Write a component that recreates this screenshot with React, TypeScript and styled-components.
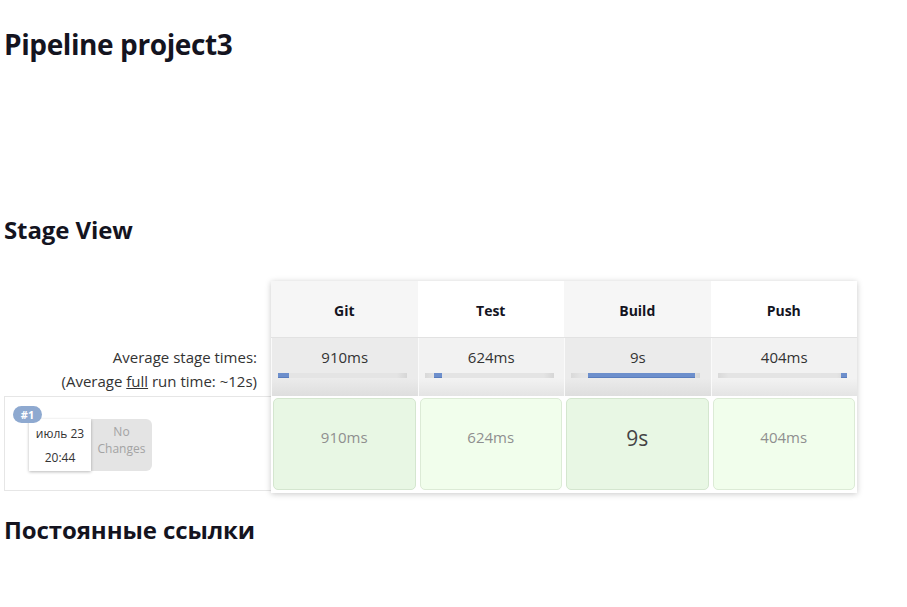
import React from "react";
import styled, { createGlobalStyle } from "styled-components";

const Global = createGlobalStyle`
  html, body { margin: 0; padding: 0; background: #fff; }
  body { font-family: "Open Sans", "Noto Sans", sans-serif; color: #333; }
`;

const Page = styled.div`
  padding: 0 4px;
  width: 899px;
  box-sizing: border-box;
`;

const Title = styled.h1`
  margin: 26px 0 0;
  font-size: 28px;
  line-height: 36px;
  font-weight: 700;
  color: #14141f;
  letter-spacing: -0.4px;
`;

const SectionTitle = styled.h2<{ $top: number }>`
  margin: ${(p) => p.$top}px 0 0;
  font-size: 24px;
  line-height: 30px;
  font-weight: 700;
  color: #14141f;
  letter-spacing: -0.1px;
`;

const StageView = styled.div`
  display: flex;
  margin-top: 36px;
  align-items: flex-start;
`;

const LeftCol = styled.div`
  width: 267px;
  display: flex;
  flex-direction: column;
`;

const HeadSpacer = styled.div`
  height: 57px;
`;

const AvgLabel = styled.div`
  height: 58px;
  box-sizing: border-box;
  padding: 7px 14px 0 0;
  text-align: right;
  font-size: 15px;
  line-height: 24px;
  color: #333;
  u { text-decoration: underline; }
`;

const RunCell = styled.div`
  height: 95px;
  box-sizing: border-box;
  border: 1px solid #e6e6e6;
  border-right: none;
  padding: 22px 0 0 24px;
`;

const RunCard = styled.div`
  position: relative;
  display: flex;
  align-items: stretch;
  width: 124px;
`;

const Badge = styled.span`
  position: absolute;
  left: -16px;
  top: -13px;
  z-index: 2;
  width: 29px;
  height: 17px;
  border-radius: 9px;
  background: #8ea9d0;
  color: #fff;
  font-size: 11px;
  font-weight: 700;
  line-height: 17px;
  text-align: center;
`;

const DateBox = styled.div`
  position: relative;
  z-index: 1;
  width: 62px;
  height: 52px;
  box-sizing: border-box;
  padding-top: 3px;
  background: #fff;
  box-shadow: 0 1px 3px rgba(0, 0, 0, 0.28);
  text-align: center;
  font-size: 12px;
  line-height: 24px;
  color: #333;
`;

const Changes = styled.div`
  width: 61px;
  height: 52px;
  box-sizing: border-box;
  padding-top: 4px;
  background: #e4e4e4;
  border-radius: 0 6px 6px 0;
  text-align: center;
  font-size: 12px;
  line-height: 17px;
  color: #a3a3a3;
`;

const StageTable = styled.div`
  display: grid;
  grid-template-columns: repeat(4, 146.5px);
  grid-template-rows: 57px 58px 97px;
  box-shadow: 0 1px 6px rgba(0, 0, 0, 0.22);
  background: #fff;
`;

const HeaderCell = styled.div<{ $odd: boolean }>`
  display: flex;
  align-items: center;
  justify-content: center;
  padding-top: 2px;
  box-sizing: border-box;
  background: ${(p) => (p.$odd ? "#f6f6f6" : "#ffffff")};
  border-bottom: 1px solid #e2e2e2;
  font-size: 14px;
  font-weight: 700;
  color: #14141f;
`;

const AvgCell = styled.div<{ $odd: boolean }>`
  box-sizing: border-box;
  padding: 7px 0 0 6px;
  background: ${(p) =>
    p.$odd
      ? "linear-gradient(#ebebeb 0%, #ebebeb 70%, #dedede 100%)"
      : "linear-gradient(#f2f2f2 0%, #f2f2f2 70%, #e4e4e4 100%)"};
  border-left: 1px solid #fafafa;
  font-size: 15px;
  line-height: 24px;
  color: #333;
`;

const AvgTime = styled.div`
  text-align: center;
  padding-right: 6px;
`;

const Track = styled.div`
  position: relative;
  margin-top: 4px;
  width: 129px;
  height: 5px;
  background: linear-gradient(90deg, #d9d9d9 0%, #e4e4e4 8%, #e4e4e4 92%, #d6d6d6 100%);
`;

const Fill = styled.div`
  position: absolute;
  top: 0;
  height: 5px;
  background: #6d8fcc;
  box-shadow: inset 0 -1px 0 #5a7dbd;
`;

const ResultCell = styled.div`
  padding: 2px 2px 3px;
  box-sizing: border-box;
  background: #fff;
`;

const ResultBox = styled.div<{ $odd: boolean; $big: boolean }>`
  height: 100%;
  box-sizing: border-box;
  border: 1px solid ${(p) => (p.$odd ? "#d4e6cf" : "#dcebd6")};
  border-radius: 5px;
  background: ${(p) => (p.$odd ? "#e8f7e4" : "#f1feec")};
  padding-top: ${(p) => (p.$big ? "25px" : "28px")};
  text-align: center;
  font-size: ${(p) => (p.$big ? "21px" : "15px")};
  line-height: ${(p) => (p.$big ? "28px" : "20px")};
  color: ${(p) => (p.$big ? "#444" : "#8f8f8f")};
`;

const stages = [
  { name: "Git", avg: "910ms", left: 0, width: 11, run: "910ms", big: false },
  { name: "Test", avg: "624ms", left: 9, width: 8, run: "624ms", big: false },
  { name: "Build", avg: "9s", left: 17, width: 107, run: "9s", big: true },
  { name: "Push", avg: "404ms", left: 123, width: 6, run: "404ms", big: false },
];

export default function App() {
  return (
    <>
      <Global />
      <Page>
        <Title>Pipeline project3</Title>
        <SectionTitle $top={153}>Stage View</SectionTitle>
        <StageView>
          <LeftCol>
            <HeadSpacer />
            <AvgLabel>
              Average stage times:
              <br />
              (Average <u>full</u> run time: ~12s)
            </AvgLabel>
            <RunCell>
              <RunCard>
                <Badge>#1</Badge>
                <DateBox>
                  июль 23
                  <br />
                  20:44
                </DateBox>
                <Changes>
                  No
                  <br />
                  Changes
                </Changes>
              </RunCard>
            </RunCell>
          </LeftCol>
          <StageTable>
            {stages.map((s, i) => (
              <HeaderCell key={"h" + s.name} $odd={i % 2 === 0}>
                {s.name}
              </HeaderCell>
            ))}
            {stages.map((s, i) => (
              <AvgCell key={"a" + s.name} $odd={i % 2 === 0}>
                <AvgTime>{s.avg}</AvgTime>
                <Track>
                  <Fill style={{ left: s.left, width: s.width }} />
                </Track>
              </AvgCell>
            ))}
            {stages.map((s, i) => (
              <ResultCell key={"r" + s.name}>
                <ResultBox $odd={i % 2 === 0} $big={s.big}>
                  {s.run}
                </ResultBox>
              </ResultCell>
            ))}
          </StageTable>
        </StageView>
        <SectionTitle $top={22}>Постоянные ссылки</SectionTitle>
      </Page>
    </>
  );
}
